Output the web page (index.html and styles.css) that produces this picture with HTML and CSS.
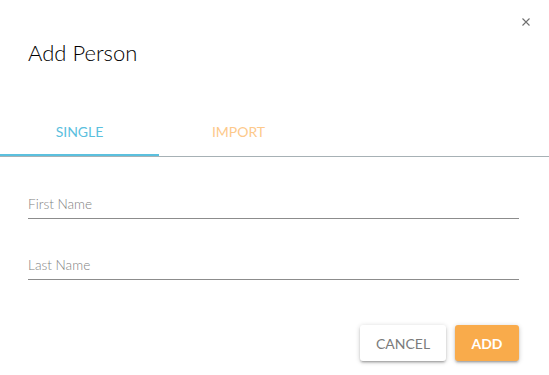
FILE: index.html
```html
<!DOCTYPE html>
<html lang="en">
<head>
<meta charset="utf-8">
<title>Add Person</title>
<link rel="stylesheet" href="styles.css">
</head>
<body>
<div class="dialog">
  <button class="close" aria-label="Close">
    <svg width="8" height="8" viewBox="0 0 8 8"><path d="M0.5 0.5L7.5 7.5M7.5 0.5L0.5 7.5" stroke="#6f6f6f" stroke-width="1.1" fill="none"/></svg>
  </button>
  <h1 class="title">Add Person</h1>
  <div class="tabs">
    <div class="tab tab-active">SINGLE</div>
    <div class="tab tab-import">IMPORT</div>
  </div>
  <div class="content">
    <div class="field"><span class="placeholder">First Name</span></div>
    <div class="field field-second"><span class="placeholder">Last Name</span></div>
    <div class="actions">
      <button class="btn btn-cancel">CANCEL</button>
      <button class="btn btn-add">ADD</button>
    </div>
  </div>
</div>
</body>
</html>
```
FILE: styles.css
```css
html, body {
  margin: 0;
  padding: 0;
  background: #ffffff;
}
body {
  font-family: Lato, "Open Sans", sans-serif;
  width: 549px;
  height: 375px;
  overflow: hidden;
}
.dialog {
  position: relative;
  width: 549px;
  height: 375px;
  background: #fff;
}
.close {
  position: absolute;
  left: 522px;
  top: 18px;
  width: 8px;
  height: 8px;
  padding: 0;
  border: 0;
  background: none;
  display: flex;
}
.title {
  margin: 0;
  padding: 40px 0 0 28px;
  font-size: 22px;
  line-height: 26px;
  font-weight: 300;
  color: #000;
}
.tabs {
  margin-top: 42px;
  display: flex;
  border-bottom: 1px solid #a7b1b5;
}
.tab {
  width: 159px;
  height: 46px;
  display: flex;
  align-items: center;
  justify-content: center;
  font-size: 14px;
  border-bottom: 2px solid transparent;
}
.tab-active {
  color: #5bc0de;
  border-bottom-color: #5bc0de;
}
.tab-import {
  color: #fdc98b;
}
.content {
  padding: 0 30px 0 28px;
}
.field {
  margin-top: 37px;
  height: 20px;
  padding-bottom: 4px;
  border-bottom: 1px solid #8c8c8c;
  font-size: 13.6px;
  line-height: 20px;
  font-weight: 300;
}
.field-second {
  margin-top: 36px;
}
.placeholder {
  color: #7f7f7f;
}
.actions {
  margin-top: 45px;
  display: flex;
  justify-content: flex-end;
  gap: 9px;
}
.btn {
  height: 36px;
  border: 0;
  border-radius: 3px;
  font-family: Lato, "Open Sans", sans-serif;
  font-size: 14px;
  padding: 0 16px;
  box-shadow: 0 1px 5px rgba(0,0,0,0.2), 0 2px 2px rgba(0,0,0,0.14), 0 3px 1px -2px rgba(0,0,0,0.12);
}
.btn-cancel {
  width: 86px;
  background: #fff;
  color: #7b7b7b;
}
.btn-add {
  width: 64px;
  background: #f9ab4b;
  color: #fff;
  font-weight: 700;
}
```
